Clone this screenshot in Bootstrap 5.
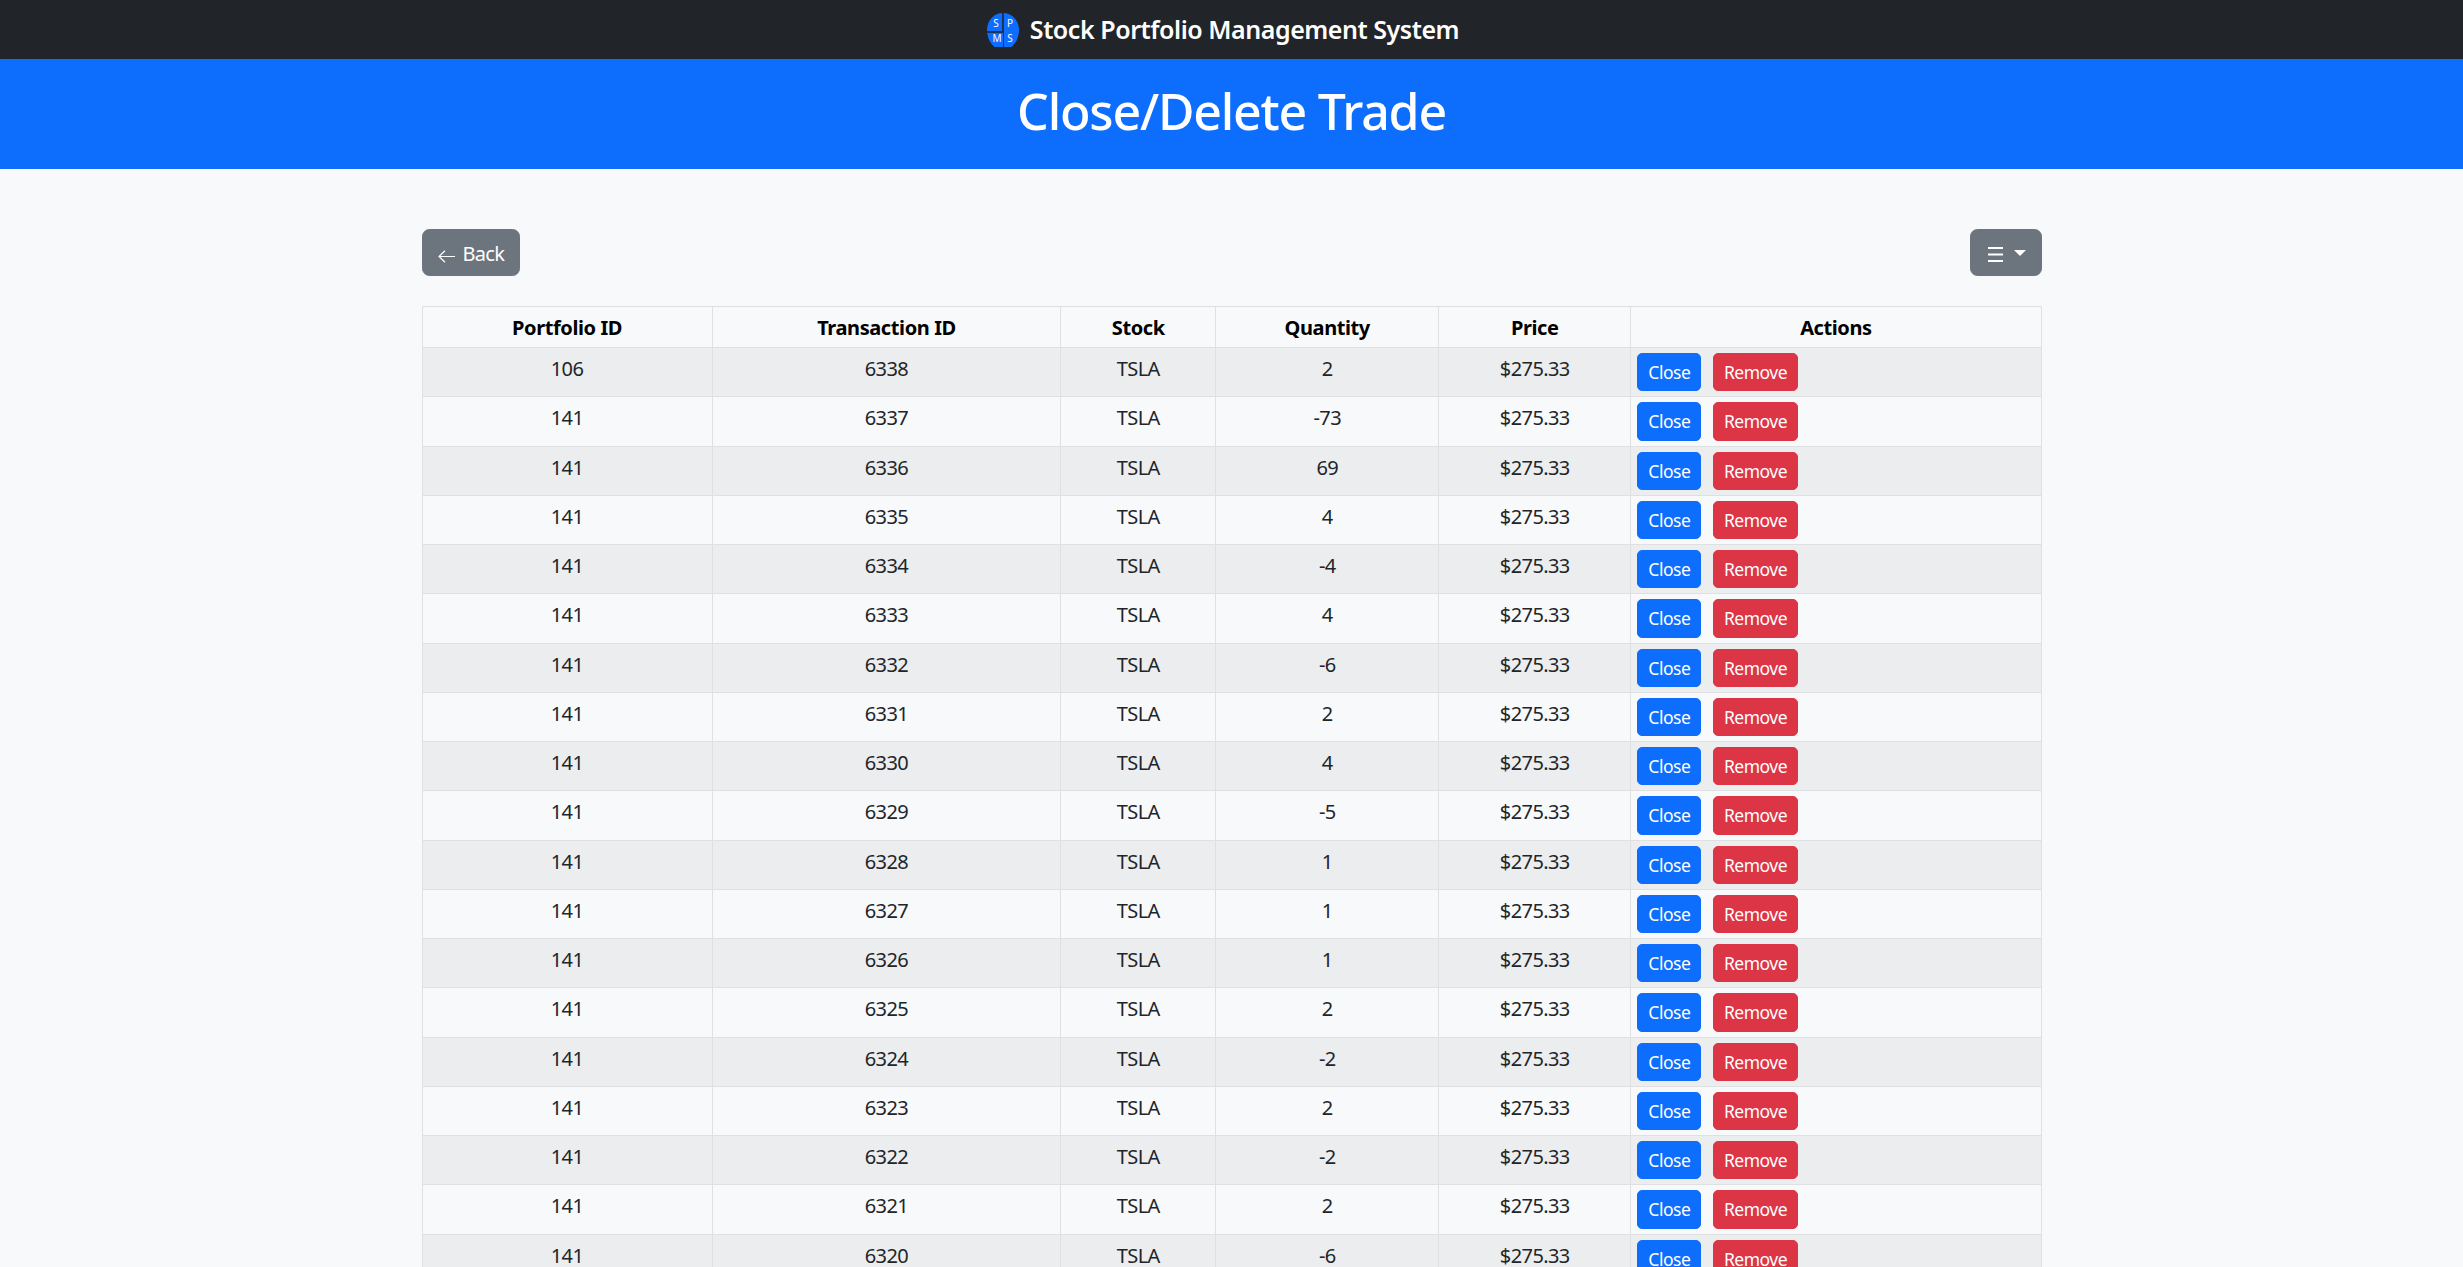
<!DOCTYPE html>
<html lang="en">
<head>
  <meta charset="UTF-8">
  <title>Close/Delete Trade</title>
  <link href="https://cdn.jsdelivr.net/npm/bootstrap@5.3.0/dist/css/bootstrap.min.css" rel="stylesheet">
  <style>
    html { font-size: 20px; }
    body { font-family: "Noto Sans", "Open Sans", sans-serif; }
    .top-bar { height: 59px; }
    .brand-row { padding-right: 17px; gap: 11px; }
    .brand-text { font-size: 25px; font-weight: 600; color: #fff; letter-spacing: -.45px; }
    .page-hero { height: 110px; }
    .page-hero h1 { font-size: 50px; font-weight: 500; margin: 0 0 6px; letter-spacing: -1.2px; }
    .page-wrap { max-width: 1650px; }
    .back-btn { gap: 8px; letter-spacing: -.7px; padding-top: 9px; padding-bottom: 6px; }
    .back-btn svg { margin-top: 5px; }
    .menu-btn svg { margin: 3px 5.500px 0 1.500px; }
    .trade-table { table-layout: fixed; --bs-table-striped-color: #212529; }
    .trade-table th { letter-spacing: -.4px; padding-top: 6px; padding-bottom: 4px; }
    .trade-table td { color: #212529; letter-spacing: -.6px; padding-top: 6px; padding-bottom: 4px; }
    .trade-table .btn { letter-spacing: -.5px; }
    .trade-table td.actions-cell { padding: 5px 5px 5px 6px; }
    .close-btn { margin-right: 7px; }
    .c-portfolio { width: 17.92%; }
    .c-transaction { width: 21.54%; }
    .c-stock { width: 9.57%; }
    .c-qty { width: 13.77%; }
    .c-price { width: 11.87%; }
    .c-actions { width: 25.33%; }
  </style>
</head>
<body class="bg-light">
<nav class="navbar navbar-dark bg-dark top-bar p-0">
  <div class="d-flex justify-content-center align-items-center w-100 brand-row">
    <svg width="32" height="34" viewBox="0 0 32 34">
      <path d="M16 0C25 0 32 7.500 32 17C32 24 29 30 24.500 34H7.500C3 30 0 24 0 17C0 7.500 7 0 16 0Z" fill="#0d6efd"/>
      <path d="M0 19H16V0" fill="none" stroke="#212529" stroke-width="1.600"/>
      <path d="M16.500 19V34" stroke="#212529" stroke-width=".7"/>
      <g fill="#fff" font-family="Noto Sans, sans-serif" font-size="10" text-anchor="middle">
        <text x="9" y="14">S</text>
        <text x="23" y="14">P</text>
        <text x="10" y="29">M</text>
        <text x="23" y="29">S</text>
      </g>
    </svg>
    <span class="brand-text">Stock Portfolio Management System</span>
  </div>
</nav>
<header class="page-hero bg-primary text-white d-flex justify-content-center align-items-center">
  <h1>Close/Delete Trade</h1>
</header>
<main class="container page-wrap mt-5">
  <div class="d-flex justify-content-between mb-4">
    <a href="#" class="btn btn-secondary d-inline-flex align-items-center back-btn">
      <svg width="17" height="13" viewBox="0 0 17 13"><path d="M17 6.500H1M7 .7L1 6.500l6 5.800" fill="none" stroke="#fff" stroke-width="1.200"/></svg>
      Back
    </a>
    <button type="button" class="btn btn-secondary dropdown-toggle d-inline-flex align-items-center menu-btn">
      <svg width="15" height="15" viewBox="0 0 15 15"><path d="M0 1H15M0 7.500H15M0 14H15" stroke="#fff" stroke-width="1.800"/></svg>
    </button>
  </div>
  <table class="table table-sm table-bordered table-striped table-light trade-table">
    <thead>
      <tr class="text-center">
        <th class="c-portfolio">Portfolio ID</th>
        <th class="c-transaction">Transaction ID</th>
        <th class="c-stock">Stock</th>
        <th class="c-qty">Quantity</th>
        <th class="c-price">Price</th>
        <th class="c-actions">Actions</th>
      </tr>
    </thead>
    <tbody id="tradesTable"></tbody>
  </table>
</main>
<script src="https://cdn.jsdelivr.net/npm/bootstrap@5.3.0/dist/js/bootstrap.bundle.min.js"></script>
<script>
  const quantities = [2, -73, 69, 4, -4, 4, -6, 2, 4, -5, 1, 1, 1, 2, -2, 2, -2, 2, -6];
  document.getElementById('tradesTable').innerHTML = quantities.map((q, i) => `
    <tr>
      <td class="text-center">${i === 0 ? 106 : 141}</td>
      <td class="text-center">${6338 - i}</td>
      <td class="text-center">TSLA</td>
      <td class="text-center">${q}</td>
      <td class="text-center">$275.33</td>
      <td class="actions-cell">
        <button class="btn btn-primary btn-sm close-btn">Close</button>
        <button class="btn btn-danger btn-sm">Remove</button>
      </td>
    </tr>
  `).join('');
</script>
</body>
</html>
